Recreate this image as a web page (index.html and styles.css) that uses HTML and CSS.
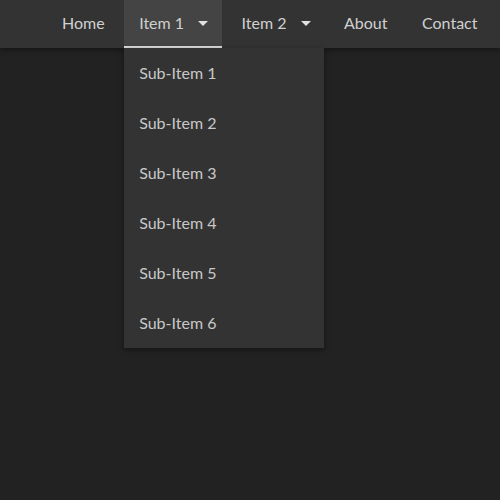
FILE: index.html
```html
<!DOCTYPE html>
<html>
<head>
<meta charset="utf-8">
<link rel="stylesheet" href="styles.css">
</head>
<body>
<nav class="navbar">
  <ul class="menu">
    <li class="item"><a href="#">Home</a></li>
    <li class="item has-sub active">
      <a href="#">Item 1 <span class="caret"></span></a>
      <ul class="dropdown">
        <li><a href="#">Sub-Item 1</a></li>
        <li><a href="#">Sub-Item 2</a></li>
        <li><a href="#">Sub-Item 3</a></li>
        <li><a href="#">Sub-Item 4</a></li>
        <li><a href="#">Sub-Item 5</a></li>
        <li><a href="#">Sub-Item 6</a></li>
      </ul>
    </li>
    <li class="item has-sub"><a href="#">Item 2 <span class="caret"></span></a></li>
    <li class="item"><a href="#">About</a></li>
    <li class="item"><a href="#">Contact</a></li>
  </ul>
</nav>
</body>
</html>
```
FILE: styles.css
```css
* { box-sizing: border-box; }
html, body {
  margin: 0;
  padding: 0;
  height: 100%;
  background: #222222;
  font-family: Lato, "Open Sans", sans-serif;
}
.navbar {
  height: 48px;
  background: #333333;
  box-shadow: 0 2px 6px rgba(0,0,0,0.4);
  position: relative;
  z-index: 2;
}
.menu {
  list-style: none;
  margin: 0;
  padding: 0 7.5px 0 0;
  display: flex;
  justify-content: flex-end;
  gap: 4.5px;
  height: 100%;
}
.item {
  position: relative;
  height: 100%;
}
.item > a {
  display: flex;
  align-items: center;
  height: 100%;
  padding: 0 15px 3px;
  color: #d0d0d0;
  text-decoration: none;
  font-size: 16px;
}
.has-sub > a { padding-right: 14px; }
.caret {
  display: inline-block;
  width: 0;
  height: 0;
  margin-left: 14px;
  border-left: 5px solid transparent;
  border-right: 5px solid transparent;
  border-top: 5px solid #e0e0e0;
  margin-top: 2px;
}
.active > a {
  background: #444444;
  box-shadow: inset 0 -2px 0 #dddddd;
}
.dropdown {
  list-style: none;
  margin: 0;
  padding: 0;
  position: absolute;
  top: 48px;
  left: 0;
  width: 200px;
  background: #333333;
  box-shadow: 0 2px 6px rgba(0,0,0,0.4);
}
.dropdown a {
  display: flex;
  align-items: center;
  height: 50px;
  padding: 0 15px 1px;
  color: #c8c8c8;
  text-decoration: none;
  font-size: 16px;
}
```
